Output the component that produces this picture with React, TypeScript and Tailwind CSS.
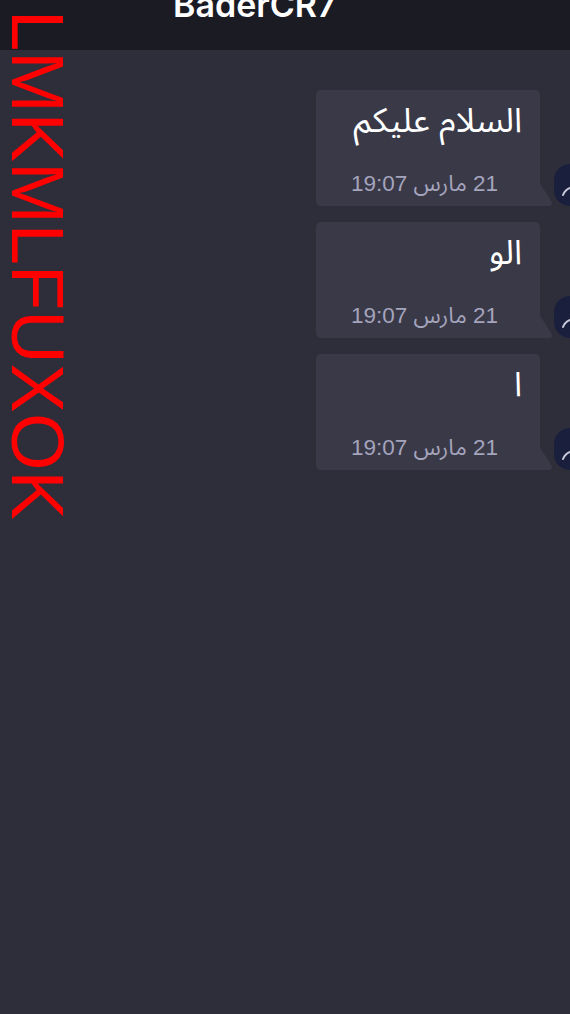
import React from "react";

const messages = [
  { id: 1, text: "السلام عليكم", time: "21 مارس 19:07" },
  { id: 2, text: "الو", time: "21 مارس 19:07" },
  { id: 3, text: "ا", time: "21 مارس 19:07" },
];

function Tail() {
  return (
    <svg width="15" height="24" viewBox="0 0 15 24" className="-ml-px shrink-0 self-end">
      <path d="M0 0 L12.5 19.5 Q14.5 23.5 10.5 24 L0 24 Z" fill="#3a3948" />
    </svg>
  );
}

function Avatar() {
  return (
    <div className="relative h-[42px] w-[42px] shrink-0 overflow-hidden rounded-[16px] bg-[#1b1f3e]">
      <svg width="42" height="42" viewBox="0 0 42 42" className="absolute inset-0">
        <path d="M9 31 Q11 26 16 24" stroke="#c9cadb" strokeWidth="2" fill="none" strokeLinecap="round" />
      </svg>
    </div>
  );
}

function Bubble({ text, time }: { text: string; time: string }) {
  return (
    <div className="flex items-end justify-end">
      <div className="flex h-[116px] w-[224px] flex-col rounded-[5px] rounded-br-none bg-[#3a3948] px-[18px] pt-[7px] pb-[11px]">
        <p dir="rtl" className="text-right text-[34px] leading-[46px] text-white">
          {text}
        </p>
        <p dir="rtl" className="mt-auto mr-[24px] text-right text-[22.5px] leading-none text-[#a4a4bc]">
          {time}
        </p>
      </div>
      <Tail />
      <Avatar />
    </div>
  );
}

export default function App() {
  return (
    <main className="relative h-[1014px] w-[570px] overflow-hidden bg-[#2e2d3a] font-['Liberation_Sans','Noto_Sans_Arabic','Noto_Sans',sans-serif]">
      <header className="h-[50px] overflow-hidden bg-[#1b1b24] pl-[173px]">
        <h1 className="-mt-[12px] font-['Inter','Liberation_Sans',sans-serif] text-[34px] leading-none font-semibold text-white">
          BaderCR7
        </h1>
      </header>

      <section className="mr-[-26px] flex flex-col gap-4 pt-[40px]">
        {messages.map((m) => (
          <Bubble key={m.id} text={m.text} time={m.time} />
        ))}
      </section>

      <div className="absolute top-[10px] left-0 font-['Liberation_Sans',sans-serif] text-[74px] leading-none text-[#ff0000] [writing-mode:vertical-rl]">
        LMKMLFUXOK
      </div>
    </main>
  );
}
